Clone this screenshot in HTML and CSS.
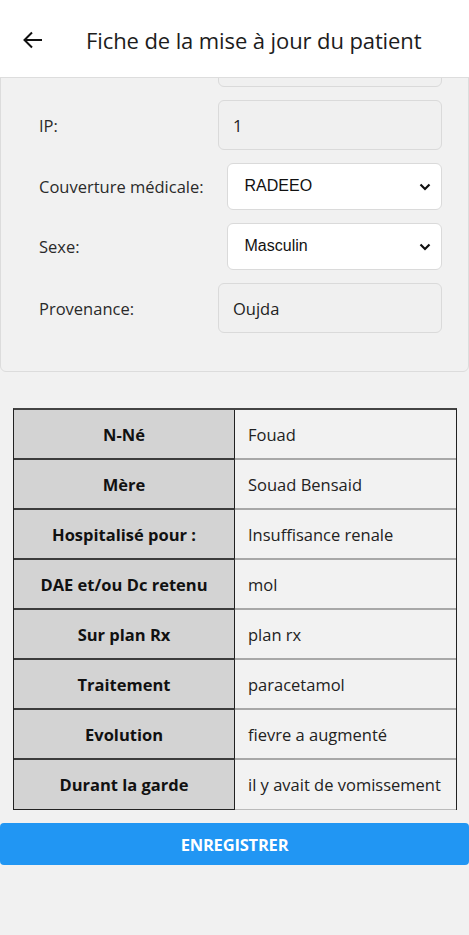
FILE: index.html
```html
<!DOCTYPE html>
<html lang="fr">
<head>
<meta charset="utf-8">
<title>Fiche de la mise à jour du patient</title>
<link rel="stylesheet" href="styles.css">
</head>
<body>
<header class="topbar">
  <button class="back" aria-label="Retour">
    <svg width="24" height="24" viewBox="0 0 24 24"><path d="M21 12H4M11 4.5L3.5 12L11 19.5" fill="none" stroke="#111" stroke-width="2"/></svg>
  </button>
  <h1 class="title">Fiche de la mise à jour du patient</h1>
</header>
<main class="page">
  <section class="card">
    <div class="row row-hidden">
      <label class="label">Nom:</label>
      <input class="field readonly" value="" readonly>
    </div>
    <div class="row">
      <label class="label">IP:</label>
      <input class="field readonly" value="1" readonly>
    </div>
    <div class="row">
      <label class="label">Couverture médicale:</label>
      <div class="select">RADEEO<svg class="chev" width="12" height="8" viewBox="0 0 12 8"><path d="M1.5 1.5L6 6L10.5 1.5" fill="none" stroke="#111" stroke-width="2.2"/></svg></div>
    </div>
    <div class="row">
      <label class="label">Sexe:</label>
      <div class="select">Masculin<svg class="chev" width="12" height="8" viewBox="0 0 12 8"><path d="M1.5 1.5L6 6L10.5 1.5" fill="none" stroke="#111" stroke-width="2.2"/></svg></div>
    </div>
    <div class="row">
      <label class="label">Provenance:</label>
      <input class="field readonly" value="Oujda" readonly>
    </div>
  </section>
  <table class="info">
    <tr><th>N-Né</th><td>Fouad</td></tr>
    <tr><th>Mère</th><td>Souad Bensaid</td></tr>
    <tr><th>Hospitalisé pour :</th><td>Insuffisance renale</td></tr>
    <tr><th>DAE et/ou Dc retenu</th><td>mol</td></tr>
    <tr><th>Sur plan Rx</th><td>plan rx</td></tr>
    <tr><th>Traitement</th><td>paracetamol</td></tr>
    <tr><th>Evolution</th><td>fievre a augmenté</td></tr>
    <tr><th>Durant la garde</th><td>il y avait de vomissement</td></tr>
  </table>
  <button class="save">ENREGISTRER</button>
</main>
</body>
</html>
```

FILE: styles.css
```css
* { box-sizing: border-box; }
html, body { margin: 0; padding: 0; }
body {
  background: #f1f1f1;
  font-family: "Open Sans", "Noto Sans", sans-serif;
  color: #222;
  height: 935px;
  overflow: hidden;
}
.topbar {
  position: fixed;
  top: 0; left: 0; right: 0;
  height: 78px;
  background: #fff;
  display: flex;
  align-items: center;
  padding: 2px 0 0 21px;
  z-index: 10;
  border-bottom: 1px solid #ddd;
}
.back {
  border: 0; background: none; padding: 0;
  width: 24px; height: 24px;
  display: flex;
}
.title {
  margin: 0 0 0 41px;
  font-size: 22px;
  font-weight: 400;
  color: #1c1c1c;
  letter-spacing: -0.1px;
}
.page {
  padding-top: 36px;
}
.card {
  border: 1px solid #dcdcdc;
  border-radius: 0 0 6px 6px;
  width: 469px;
  padding: 0 26px 38px 38px;
  display: flex;
  flex-direction: column;
  gap: 13px;
}
.row {
  display: flex;
  align-items: center;
}
.label {
  width: 180px;
  font-size: 16.5px;
  color: #2a2a2a;
}
.field {
  width: 224px;
  height: 50px;
  border: 1px solid #dadada;
  border-radius: 6px;
  background: #f0f0f0;
  font: inherit;
  font-size: 16.5px;
  color: #222;
  padding: 0 14px;
  outline: none;
}
.select {
  margin-left: 8px;
  width: 216px;
  height: 47px;
  border: 1px solid #dadada;
  border-radius: 6px;
  background: #fff;
  font-family: "Liberation Sans", Arial, sans-serif;
  font-size: 16px;
  color: #111;
  display: flex;
  align-items: center;
  justify-content: space-between;
  padding: 0 10px 2px 17px;
}
.chev { display: block; margin-top: 2px; }
.info {
  margin: 36px 0 0 13px;
  width: 444px;
  border-collapse: separate;
  border-spacing: 0;
  border-left: 1px solid #222;
  border-right: 1px solid #222;
  border-top: 2px solid #444;
  table-layout: fixed;
}
.info th, .info td {
  height: 50px;
  font-size: 16.5px;
  padding: 0;
}
.info th {
  width: 221px;
  background: #d3d3d3;
  font-weight: 700;
  text-align: center;
  color: #111;
  border-right: 1px solid #222;
  border-bottom: 2px solid #3c3c3c;
}
.info td {
  background: #f2f2f2;
  text-align: left;
  padding-left: 13px;
  color: #222;
  border-bottom: 2px solid #a8a8a8;
  white-space: nowrap;
}
.info tr:last-child th { border-bottom: 1px solid #222; }
.info tr:last-child td { border-bottom: 1px solid #bbb; }
.save {
  display: block;
  margin-top: 13px;
  width: 469px;
  height: 42px;
  border: 0;
  border-radius: 4px;
  background: #2196f3;
  color: #fff;
  font-family: inherit;
  font-size: 16.5px;
  font-weight: 700;
  letter-spacing: -0.2px;
}
```
